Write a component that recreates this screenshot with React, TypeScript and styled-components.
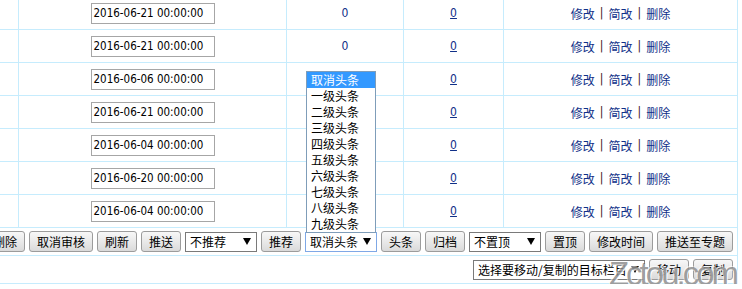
import React from "react";
import styled, { createGlobalStyle } from "styled-components";

const LINE = "#c6ecfd";
const NAVY = "#0f2f88";
const CJK = `"Noto Sans CJK SC", "Noto Sans", sans-serif`;
const LATIN = `"DejaVu Sans Condensed", "DejaVu Sans", "Liberation Sans", sans-serif`;

const GlobalStyle = createGlobalStyle`
  html, body {
    margin: 0;
    padding: 0;
    background: #ffffff;
    overflow: hidden;
  }
  body {
    font-family: ${CJK};
    font-size: 12px;
    color: #000;
  }
`;

const rows = [
  "2016-06-21 00:00:00",
  "2016-06-21 00:00:00",
  "2016-06-06 00:00:00",
  "2016-06-21 00:00:00",
  "2016-06-04 00:00:00",
  "2016-06-20 00:00:00",
  "2016-06-04 00:00:00",
];

const headlineOptions = [
  "取消头条",
  "一级头条",
  "二级头条",
  "三级头条",
  "四级头条",
  "五级头条",
  "六级头条",
  "七级头条",
  "八级头条",
  "九级头条",
];

const Page = styled.div`
  position: relative;
  width: 738px;
  margin-top: -3px;
`;

const Row = styled.div`
  display: grid;
  grid-template-columns: 19px 268px 117px 100px 234px;
  height: 33px;
  box-sizing: border-box;
  border-bottom: 1px solid ${LINE};
`;

const Cell = styled.div`
  display: flex;
  align-items: center;
  justify-content: center;
  box-sizing: border-box;
  border-right: 1px solid ${LINE};
`;

const DateInput = styled.div`
  width: 124px;
  height: 21px;
  box-sizing: border-box;
  border: 1px solid #a6a6a6;
  padding: 0 0 0 2px;
  font-family: ${LATIN};
  font-size: 11.5px;
  line-height: 19px;
  color: #000;
  white-space: nowrap;
  overflow: hidden;
`;

const Count = styled.span<{ $link?: boolean }>`
  font-family: ${LATIN};
  font-size: 12px;
  color: ${NAVY};
  text-decoration: ${(p) => (p.$link ? "underline" : "none")};
`;

const Actions = styled.div`
  display: flex;
  align-items: center;
  font-size: 12px;
  color: ${NAVY};
`;

const Sep = styled.span`
  margin: 0 5px;
  color: #3a1020;
  font-family: ${LATIN};
`;

const ToolRow = styled.div`
  display: flex;
  justify-content: flex-end;
  align-items: center;
  gap: 4px;
  height: 28px;
  box-sizing: border-box;
  padding-right: 4px;
  border-right: 1px solid ${LINE};
  border-bottom: 1px solid ${LINE};
`;

const Button = styled.div<{ $w: number }>`
  flex-shrink: 0;
  width: ${(p) => p.$w}px;
  height: 21px;
  box-sizing: border-box;
  border: 1px solid #9c9c9c;
  border-radius: 3px;
  background: linear-gradient(#f7f7f7, #e9e9e9 50%, #dadada);
  display: flex;
  align-items: center;
  justify-content: center;
  font-size: 12px;
  color: #000;
`;

const SelectBox = styled.div<{ $w: number; $focus?: boolean }>`
  position: relative;
  flex-shrink: 0;
  width: ${(p) => p.$w}px;
  height: 20px;
  box-sizing: border-box;
  border: 1px solid ${(p) => (p.$focus ? "#7fa8e6" : "#7a7a7a")};
  background: #fff;
  display: flex;
  align-items: center;
  padding: 0 3px 0 4px;
  font-size: 12px;
  color: #000;
`;

const SelectText = styled.span`
  flex: 1;
  white-space: nowrap;
  overflow: hidden;
`;

const Arrow = styled.span`
  flex-shrink: 0;
  width: 0;
  height: 0;
  margin: 0 2px 0 3px;
  border-left: 4px solid transparent;
  border-right: 4px solid transparent;
  border-top: 7px solid #000;
`;

const OptionList = styled.div`
  position: absolute;
  left: 0;
  bottom: 100%;
  z-index: 10;
  width: 100%;
  box-sizing: border-box;
  border: 1px solid #7f9db9;
  background: #fff;
`;

const Option = styled.div<{ $active?: boolean }>`
  height: 16px;
  line-height: 16px;
  padding-left: 4px;
  font-size: 12px;
  background: ${(p) => (p.$active ? "#3399ff" : "#fff")};
  color: ${(p) => (p.$active ? "#fff" : "#000")};
`;

const Watermark = styled.div`
  position: absolute;
  right: 2px;
  bottom: -9px;
  z-index: 20;
  font-family: "Liberation Sans", Arial, sans-serif;
  font-size: 33px;
  letter-spacing: -3px;
  color: rgba(95, 95, 95, 0.6);
  text-shadow: 1px 1px 0 rgba(255, 255, 255, 0.9), -1px -1px 0 rgba(255, 255, 255, 0.6);
  pointer-events: none;
`;

const Select: React.FC<{ w: number; label: string; focus?: boolean; children?: React.ReactNode }> = ({
  w,
  label,
  focus,
  children,
}) => (
  <SelectBox $w={w} $focus={focus}>
    <SelectText>{label}</SelectText>
    <Arrow />
    {children}
  </SelectBox>
);

export default function App() {
  return (
    <>
      <GlobalStyle />
      <Page>
        {rows.map((date, i) => (
          <Row key={i}>
            <Cell />
            <Cell>
              <DateInput>{date}</DateInput>
            </Cell>
            <Cell>{i < 2 && <Count>0</Count>}</Cell>
            <Cell>
              <Count $link>0</Count>
            </Cell>
            <Cell>
              <Actions>
                <span>修改</span>
                <Sep>|</Sep>
                <span>简改</span>
                <Sep>|</Sep>
                <span>删除</span>
              </Actions>
            </Cell>
          </Row>
        ))}
        <ToolRow>
          <Button $w={40}>删除</Button>
          <Button $w={64}>取消审核</Button>
          <Button $w={40}>刷新</Button>
          <Button $w={40}>推送</Button>
          <Select w={72} label="不推荐" />
          <Button $w={40}>推荐</Button>
          <Select w={72} label="取消头条" focus>
            <OptionList>
              {headlineOptions.map((o, i) => (
                <Option key={o} $active={i === 0}>
                  {o}
                </Option>
              ))}
            </OptionList>
          </Select>
          <Button $w={40}>头条</Button>
          <Button $w={40}>归档</Button>
          <Select w={72} label="不置顶" />
          <Button $w={40}>置顶</Button>
          <Button $w={64}>修改时间</Button>
          <Button $w={76}>推送至专题</Button>
        </ToolRow>
        <ToolRow>
          <Select w={172} label="选择要移动/复制的目标栏目" />
          <Button $w={40}>移动</Button>
          <Button $w={40}>复制</Button>
        </ToolRow>
        <Watermark>Zctou.com</Watermark>
      </Page>
    </>
  );
}
